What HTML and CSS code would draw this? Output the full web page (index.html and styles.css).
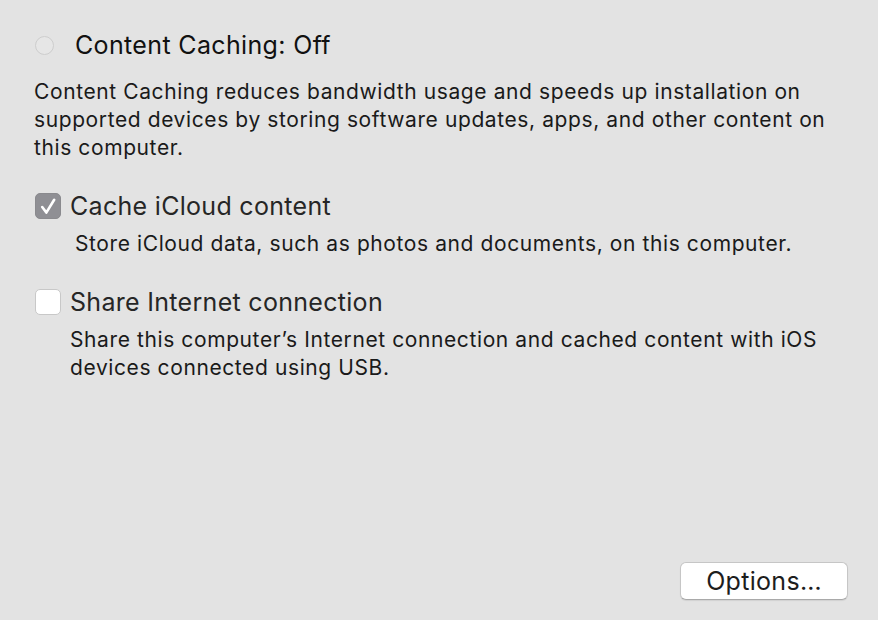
FILE: index.html
```html
<!DOCTYPE html>
<html>
<head>
<meta charset="utf-8">
<link rel="stylesheet" href="styles.css">
</head>
<body>
<div class="pane">
  <div class="main-row">
    <span class="radio"></span>
    <span class="title">Content Caching: Off</span>
  </div>
  <p class="desc">Content Caching reduces bandwidth usage and speeds up installation on supported devices by storing software updates, apps, and other content on this computer.</p>

  <div class="option">
    <div class="check-row">
      <span class="checkbox checked">
        <svg width="26" height="26" viewBox="0 0 26 26"><path d="M7.2 14 L11.3 19.6 L19.2 6.8" fill="none" stroke="#fff" stroke-width="2.6" stroke-linecap="round" stroke-linejoin="round"/></svg>
      </span>
      <span class="label">Cache iCloud content</span>
    </div>
    <p class="sub sub-a">Store iCloud data, such as photos and documents, on this computer.</p>
  </div>

  <div class="option">
    <div class="check-row">
      <span class="checkbox"></span>
      <span class="label">Share Internet connection</span>
    </div>
    <p class="sub">Share this computer’s Internet connection and cached content with iOS devices connected using USB.</p>
  </div>

  <div class="footer">
    <button class="btn">Options…</button>
  </div>
</div>
</body>
</html>
```
FILE: styles.css
```css
html, body {
  margin: 0;
  padding: 0;
  background: #e3e3e3;
}
body {
  width: 878px;
  height: 620px;
  overflow: hidden;
  font-family: "Inter", "Liberation Sans", Arial, sans-serif;
  color: #1a1a1a;
}
.pane {
  height: 620px;
  box-sizing: border-box;
  padding: 30px 30px 20px 34px;
  display: flex;
  flex-direction: column;
}
.main-row {
  display: flex;
  align-items: center;
  gap: 21px;
  height: 30px;
}
.radio {
  width: 19px;
  height: 19px;
  box-sizing: border-box;
  border-radius: 50%;
  border: 1px solid #cdcdcd;
  background: #e6e6e6;
  margin-left: 1px;
}
.title {
  font-size: 25px;
  letter-spacing: 0.35px;
  color: #111;
}
.desc {
  margin: 18px 0 0 0;
  font-size: 21px;
  letter-spacing: 0.6px;
  line-height: 28px;
  width: 800px;
}
.option {
  margin-top: 30px;
}
.check-row {
  display: flex;
  align-items: center;
  gap: 9px;
  height: 28px;
}
.checkbox {
  width: 26px;
  height: 26px;
  box-sizing: border-box;
  border-radius: 5px;
  border: 1px solid #c8c8c8;
  background: #fff;
  display: flex;
  margin-left: 1px;
}
.checkbox.checked {
  background: #8f8f94;
  border-color: #8a8a8e;
}
.checkbox svg {
  margin: -1px;
}
.label {
  font-size: 25px;
  letter-spacing: 0.3px;
  color: #262626;
}
.sub {
  margin: 10px 0 0 36px;
  font-size: 21px;
  letter-spacing: 0.6px;
  line-height: 28px;
  width: 780px;
}
.sub-a {
  margin-left: 41px;
}
.footer {
  margin-top: auto;
  display: flex;
  justify-content: flex-end;
}
.btn {
  width: 168px;
  height: 38px;
  background: #fff;
  border: 1px solid #c6c6c6;
  border-bottom-color: #a9a9a9;
  border-radius: 6px;
  font-family: inherit;
  font-size: 25px;
  letter-spacing: 0.3px;
  color: #1d1d1d;
  padding: 0;
  box-shadow: 0 1px 1px rgba(0,0,0,0.08);
}
```
